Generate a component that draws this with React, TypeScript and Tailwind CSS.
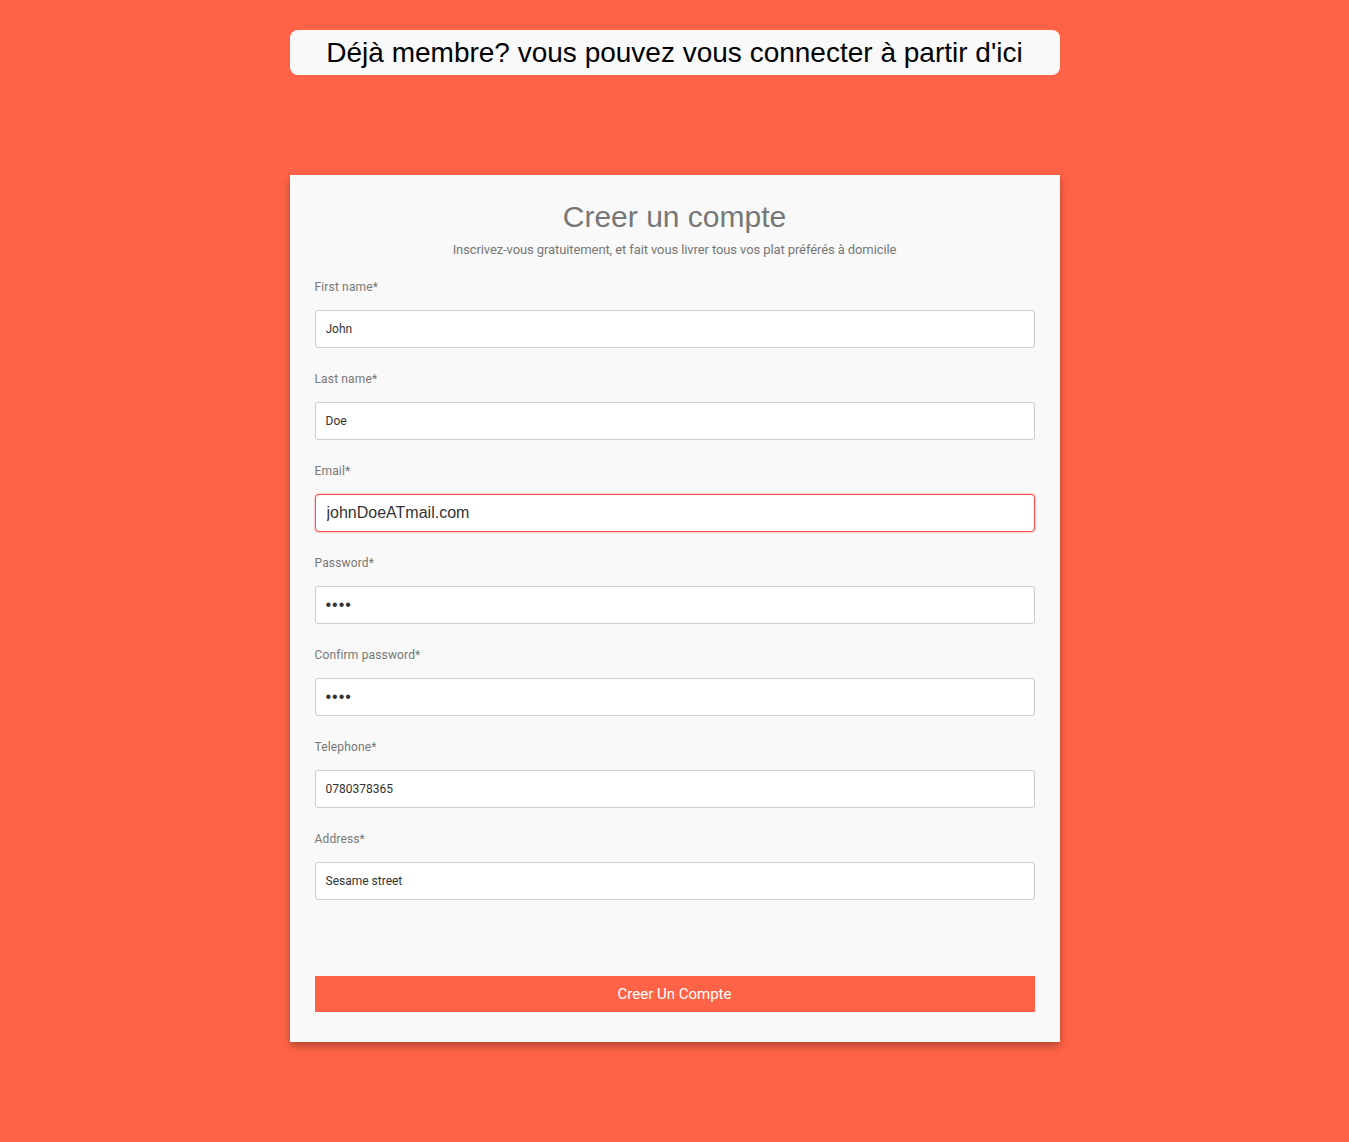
import React from 'react';

const FIELDS = [
  { label: 'First name*', value: 'John', type: 'text' },
  { label: 'Last name*', value: 'Doe', type: 'text' },
  { label: 'Email*', value: 'johnDoeATmail.com', type: 'email', invalid: true },
  { label: 'Password*', value: 'abcd', type: 'password' },
  { label: 'Confirm password*', value: 'abcd', type: 'password' },
  { label: 'Telephone*', value: '0780378365', type: 'text' },
  { label: 'Address*', value: 'Sesame street', type: 'text' },
];

const inputBase = 'mt-[15px] h-[38px] rounded-[3px] border border-[#cccccc] bg-white px-[10px] text-[#333] outline-none';

export default function App() {
  return (
    <div className="min-h-[1142px] bg-[#ff6347] pt-[30px] pb-[100px] font-['Liberation_Sans',Arial,sans-serif]">
      <div className="mx-auto w-[770px]">
        <div className="flex h-[45px] items-center justify-center rounded-[8px] bg-[#f9f9f9] text-[28px] text-black">
          Déjà membre? vous pouvez vous connecter à partir d'ici
        </div>

        <form className="mt-[100px] bg-[#f9f9f9] px-[25px] pt-[24px] pb-[30px] shadow-[0_4px_8px_rgba(0,0,0,0.3)]">
          <h1 className="text-center text-[30px] leading-[36px] text-[#777777]">Creer un compte</h1>
          <p className="mt-[7px] text-center font-['Roboto',sans-serif] text-[13px] leading-[16px] tracking-[-0.1px] text-[#777777]">
            Inscrivez-vous gratuitement, et fait vous livrer tous vos plat préférés à domicile
          </p>

          <div className="mt-[11px] flex flex-col">
            {FIELDS.map((f) => (
              <div key={f.label} className="flex flex-col pt-[10px] pb-[13px]">
                <label className="font-['Roboto',sans-serif] text-[12px] leading-[16px] tracking-[0.15px] text-[#777777]">{f.label}</label>
                {f.invalid ? (
                  <input
                    type={f.type}
                    defaultValue={f.value}
                    className="mt-[15px] h-[38px] rounded-[4px] border border-[#f05050] bg-white px-[11px] text-[16px] text-[#333] shadow-[0_0_2px_rgba(255,0,0,0.5)] outline-none"
                  />
                ) : f.type === 'password' ? (
                  <input type="password" defaultValue={f.value} className={`${inputBase} text-[16px] tracking-[1px]`} />
                ) : (
                  <input type={f.type} defaultValue={f.value} className={`${inputBase} font-['Roboto',sans-serif] text-[12px]`} />
                )}
              </div>
            ))}
          </div>

          <button
            type="button"
            className="mt-[63px] h-[36px] w-full bg-[#ff6347] font-['Roboto',sans-serif] text-[15px] text-white"
          >
            Creer Un Compte
          </button>
        </form>
      </div>
    </div>
  );
}
